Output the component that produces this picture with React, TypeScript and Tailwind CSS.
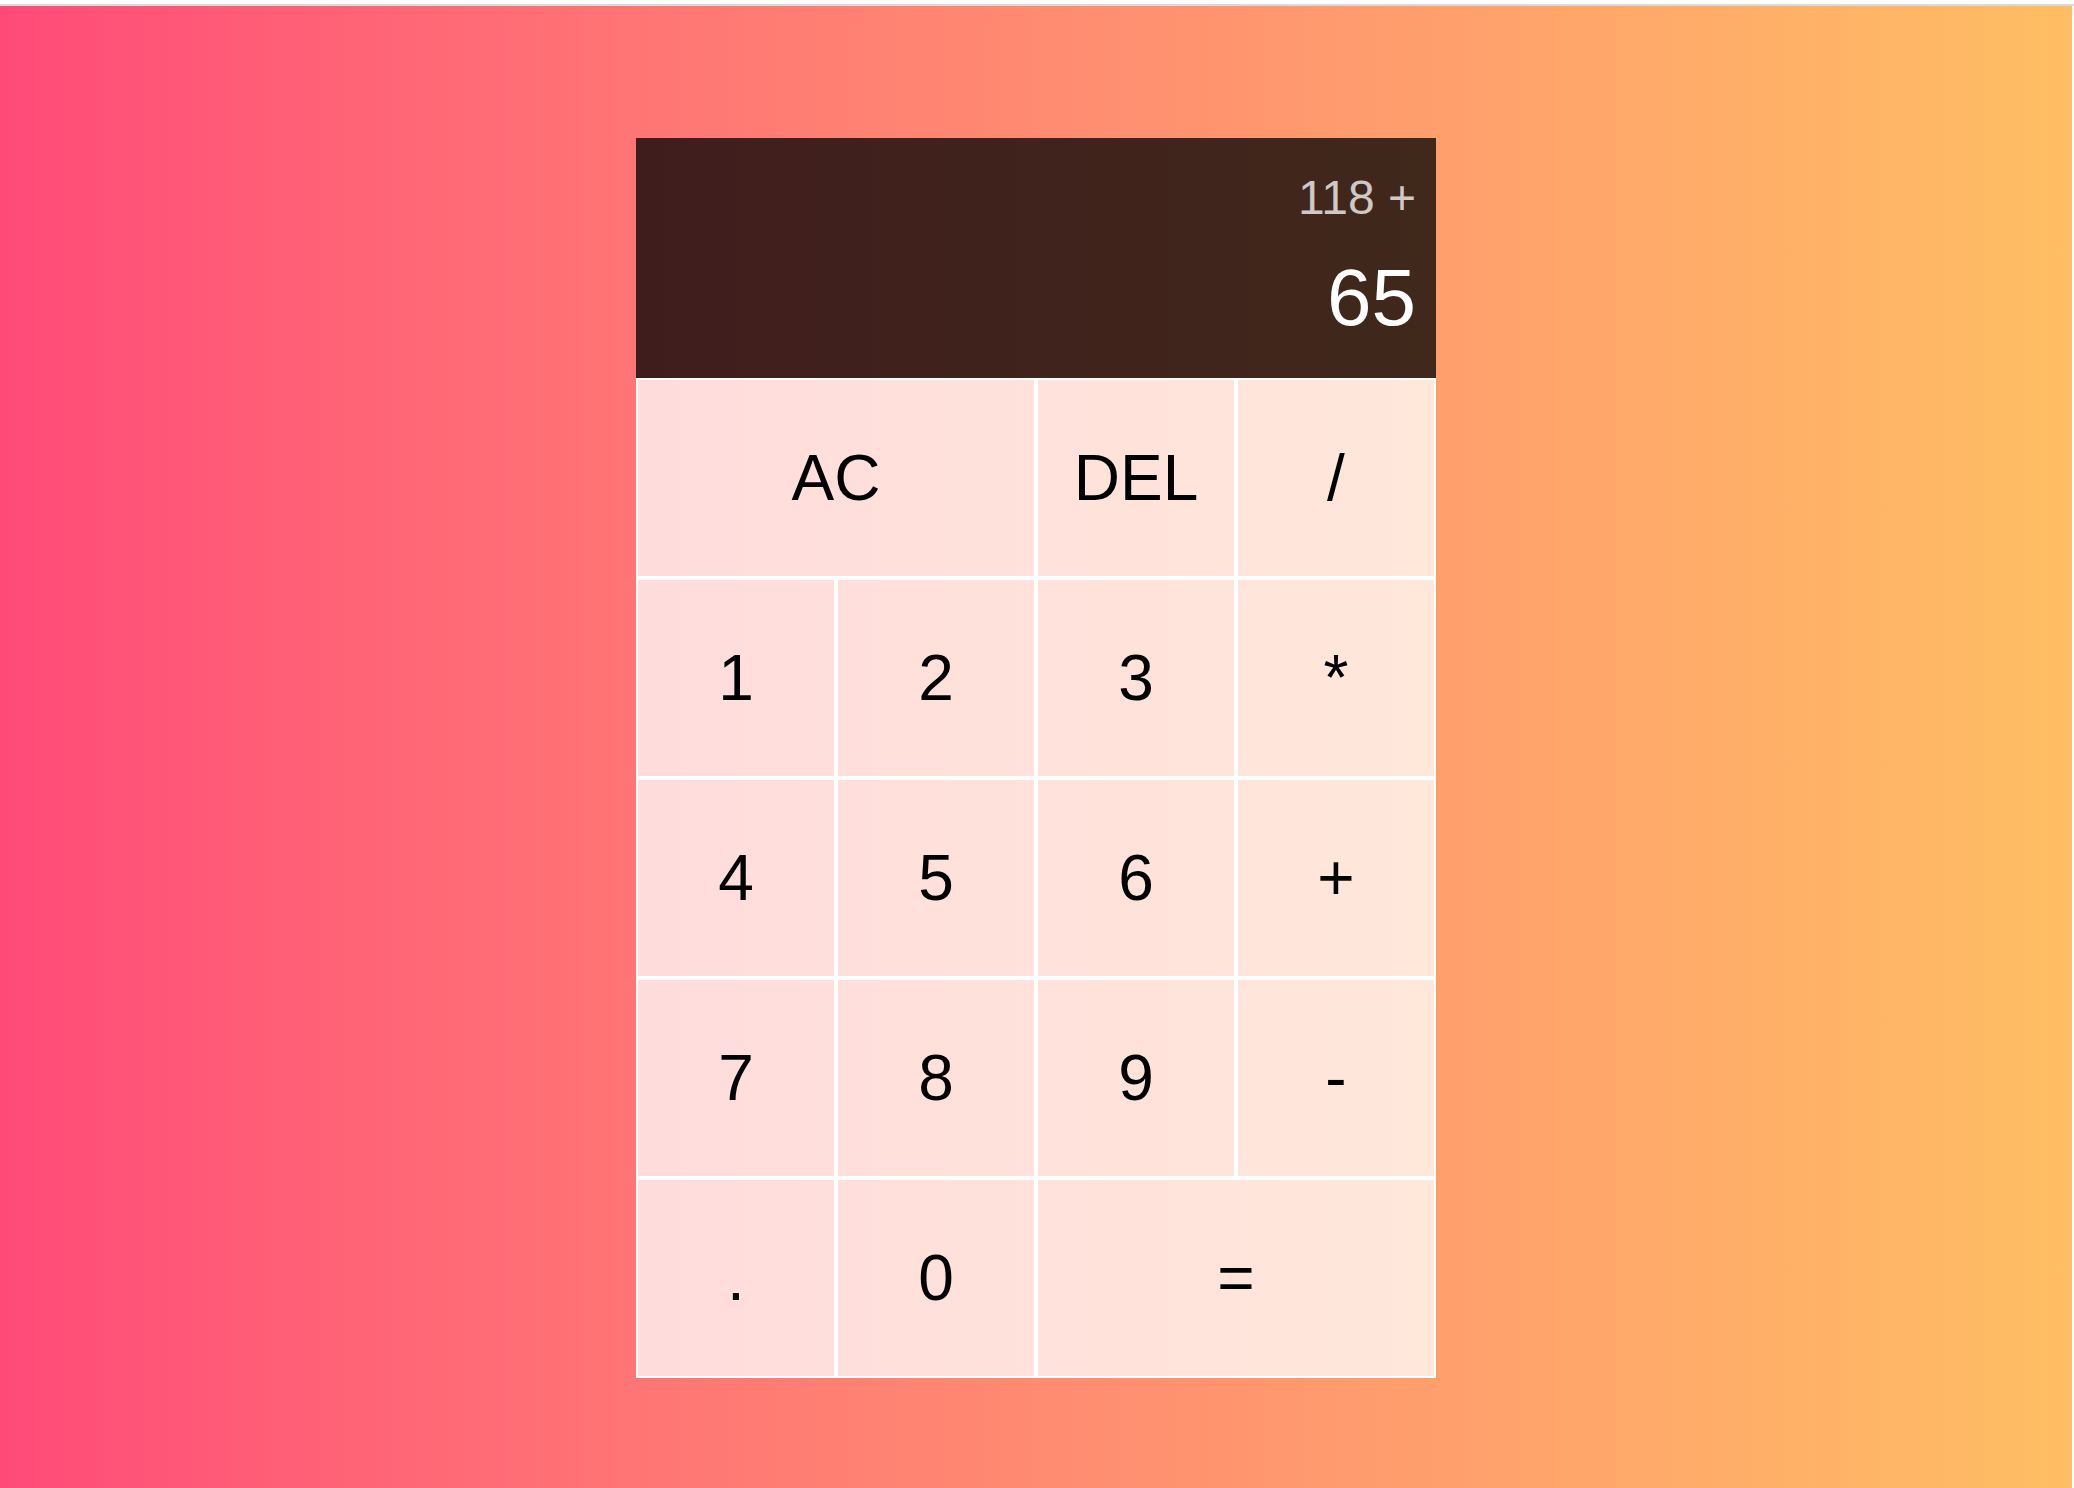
import React from "react";

const keys: { label: string; span?: boolean }[] = [
  { label: "AC", span: true },
  { label: "DEL" },
  { label: "/" },
  { label: "1" },
  { label: "2" },
  { label: "3" },
  { label: "*" },
  { label: "4" },
  { label: "5" },
  { label: "6" },
  { label: "+" },
  { label: "7" },
  { label: "8" },
  { label: "9" },
  { label: "-" },
  { label: "." },
  { label: "0" },
  { label: "=", span: true },
];

export default function App() {
  return (
    <div
      className="w-[2074px] h-[1488px] bg-white overflow-hidden"
      style={{ fontFamily: '"Liberation Sans", Arial, sans-serif' }}
    >
      <div className="h-[4px] bg-white" />
      <div className="h-[2px] bg-[#dadada]" />
      <div className="w-[2072px] h-[1482px] bg-linear-to-r from-[#ff4a78] to-[#ffbe63] flex justify-center pt-[132px]">
        <div className="grid grid-cols-[repeat(4,200px)] grid-rows-[240px_repeat(5,200px)] h-fit">
          <div className="col-span-4 bg-black/75 flex flex-col items-end pt-[36px] pr-[20px]">
            <div className="text-[48px] leading-[48px] text-white/75">118 +</div>
            <div className="mt-[36px] text-[80px] leading-[80px] text-white">65</div>
          </div>
          {keys.map((k, i) => (
            <button
              key={i}
              className={`${k.span ? "col-span-2" : ""} border-2 border-white bg-white/75 text-black text-[64px] flex items-center justify-center cursor-pointer outline-none`}
            >
              {k.label}
            </button>
          ))}
        </div>
      </div>
    </div>
  );
}
